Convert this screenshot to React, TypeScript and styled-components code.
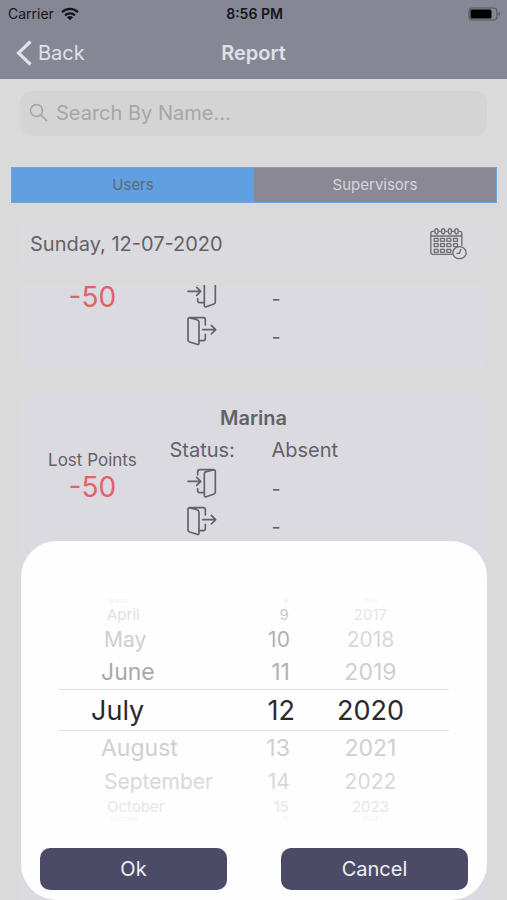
import React, { useLayoutEffect, useRef, useState } from "react";
import styled, { createGlobalStyle } from "styled-components";

const GlobalStyle = createGlobalStyle`
  *, *::before, *::after { box-sizing: border-box; }
  body {
    margin: 0;
    background: #dadada;
    font-family: Inter, "Liberation Sans", sans-serif;
  }
  button, input { font: inherit; }
`;

const Screen = styled.div`
  position: relative;
  display: flex;
  flex-direction: column;
  height: 100vh;
  overflow: hidden;
  color: #636267;
  background: #dadada;
`;

const Header = styled.header`
  flex: none;
  background: #858894;
`;

const StatusBar = styled.div`
  display: grid;
  grid-template-columns: 1fr auto 1fr;
  align-items: center;
  height: 27px;
  padding: 0 6px 0 8px;
  font-size: 14px;
  color: #14151d;
`;

const Carrier = styled.span`
  display: flex;
  align-items: center;
  gap: 7px;
`;

const Clock = styled.time`
  font-weight: 600;
`;

const BatteryIcon = styled.svg`
  justify-self: end;
`;

const NavBar = styled.nav`
  display: grid;
  grid-template-columns: 1fr auto 1fr;
  align-items: center;
  height: 52px;
  padding: 0 16px;
  color: #e0e0e8;
`;

const BackButton = styled.button`
  display: flex;
  align-items: center;
  justify-self: start;
  gap: 6px;
  padding: 0;
  border: 0;
  background: none;
  color: inherit;
  font-size: 20px;
`;

const Title = styled.h1`
  margin: 0;
  font-size: 20px;
  font-weight: 600;
`;

const SearchBox = styled.label`
  display: flex;
  flex: none;
  align-items: center;
  gap: 8px;
  height: 45px;
  margin: 12px 20px 31px;
  padding: 0 9px 2px;
  border-radius: 12px;
  background: #d4d4d4;
  color: #a3a3a5;
`;

const SearchInput = styled.input`
  flex: 1;
  min-width: 0;
  padding: 0;
  border: 0;
  outline: 0;
  background: none;
  color: #636267;
  font-size: 20px;
  &::placeholder { color: #a6a6a8; opacity: 1; }
`;

const Tabs = styled.div`
  display: grid;
  flex: none;
  grid-template-columns: 1fr 1fr;
  height: 36px;
  margin: 0 10px 0 11px;
  border: 1px solid #6fa3dc;
`;

const Tab = styled.button<{ $active: boolean }>`
  padding: 0 0 2px;
  border: 0;
  background: ${(p) => (p.$active ? "#619fe0" : "#8b8895")};
  color: ${(p) => (p.$active ? "#5d6878" : "#d6d5db")};
  font-size: 15px;
`;

const DateBar = styled.div`
  display: flex;
  flex: none;
  align-items: center;
  justify-content: space-between;
  height: 44px;
  margin: 19px 20px;
  padding: 0 20px 0 10px;
  background: #dbdadf;
  font-size: 20px;
`;

const IconButton = styled.button`
  display: flex;
  padding: 0;
  border: 0;
  background: none;
  color: #6c6c71;
`;

const List = styled.main`
  display: flex;
  flex: 1;
  flex-direction: column;
  gap: 22px;
  min-height: 0;
  padding: 0 20px;
  overflow-y: auto;
  scrollbar-width: none;
`;

const Card = styled.article`
  flex: none;
  min-height: 168px;
  padding: 12px 0 16px;
  border-radius: 14px;
  background: #dbdae1;
`;

const CardName = styled.h2`
  min-height: 28px;
  margin: 0;
  font-size: 20px;
  font-weight: 600;
  line-height: 28px;
  text-align: center;
`;

const CardBody = styled.div`
  display: grid;
  grid-template-columns: 31% 16% 1fr;
  font-size: 20px;
`;

const Lost = styled.div`
  grid-row: span 3;
  padding-top: 16px;
  font-size: 17px;
  line-height: 24px;
  text-align: center;
`;

const Points = styled.div`
  color: #e2626a;
  font-size: 28px;
  line-height: 30px;
`;

const Label = styled.div`
  height: 36px;
  line-height: 36px;
  text-align: center;
`;

const Value = styled.div`
  height: 36px;
  padding-left: 32px;
  line-height: 36px;
`;

const Direction = styled.div`
  display: flex;
  justify-content: center;
  height: 38px;
`;

const TimeValue = styled.div`
  height: 38px;
  padding-left: 32px;
  line-height: 42px;
`;

const Sheet = styled.section`
  position: absolute;
  right: 20px;
  bottom: 0;
  left: 21px;
  padding: 56px 19px 10px;
  border-radius: 36px;
  background: #fefefe;
`;

const Wheels = styled.div`
  display: grid;
  grid-template-columns: 46% 15% 1fr;
  margin: 0 19px 25px;
`;

type Align = "left" | "right" | "center";

const WheelColumn = styled.div`
  display: flex;
  flex-direction: column;
`;

const rowHeights = [42, 34, 32, 18, 8];
const rowSizes = [27, 23, 21, 15, 6];
const fadedColors = ["#2a2a2c", "#cfcfd1", "#d8d8da", "#e6e6e7", "#f4f4f4"];
const monthColors = ["#2a2a2c", "#a9a9ab", "#cfcfd1", "#e0e0e1", "#f2f2f2"];
const dayColors = ["#2a2a2c", "#b2b2b4", "#b0b0b2", "#cbcbcc", "#e8e8e8"];
const leftInsets = [32, 42, 45, 48, 50];
const rightInsets = [2, 7, 7, 8, 9];

const insets: Record<Align, (distance: number) => string> = {
  left: (distance) => `0 0 0 ${leftInsets[distance]}px`,
  right: (distance) => `0 ${rightInsets[distance]}px 0 0`,
  center: () => "0 5px 0 0",
};

const WheelOption = styled.button<{ $distance: number; $align: Align; $color: string }>`
  height: ${(p) => rowHeights[p.$distance]}px;
  padding: ${(p) => insets[p.$align](p.$distance)};
  border: 0 solid #dededf;
  border-width: ${(p) => (p.$distance === 0 ? "1px 0" : "0")};
  background: none;
  color: ${(p) => p.$color};
  font-size: ${(p) => rowSizes[p.$distance]}px;
  line-height: 1;
  text-align: ${(p) => p.$align};
`;

const Actions = styled.div`
  display: grid;
  grid-template-columns: 1fr 1fr;
  gap: 54px;
`;

const ActionButton = styled.button`
  height: 42px;
  border: 0;
  border-radius: 10px;
  background: #4c4b67;
  color: #eeeef6;
  font-size: 20px;
`;

function WifiIcon() {
  return (
    <svg width="18" height="14" viewBox="0 0 18 14" aria-hidden="true">
      <g fill="none" stroke="currentColor" strokeWidth="2.3">
        <path d="M1 5.2C5.4.8 12.6.8 17 5.2" />
        <path d="M4 8.3c2.8-2.7 7.2-2.7 10 0" />
      </g>
      <path d="M9 13.3 5.9 10.2c1.7-1.6 4.5-1.6 6.2 0Z" fill="currentColor" />
    </svg>
  );
}

function Battery() {
  return (
    <BatteryIcon width="33" height="14" viewBox="0 0 33 14" aria-hidden="true">
      <rect x="1" y="1" width="28" height="12" rx="3.5" fill="none" stroke="#54565f" strokeWidth="1.2" />
      <rect x="2.5" y="2.5" width="21" height="9" rx="1.5" fill="#000" />
      <path d="M30.5 5v4c2-.8 2-3.2 0-4Z" fill="#54565f" />
    </BatteryIcon>
  );
}

function BackIcon() {
  return (
    <svg width="16" height="26" viewBox="0 0 16 26" aria-hidden="true">
      <path d="M14.500 1.500 2.500 13l12 11.500" fill="none" stroke="currentColor" strokeWidth="3.2" />
    </svg>
  );
}

function SearchIcon() {
  return (
    <svg width="19" height="19" viewBox="0 0 19 19" aria-hidden="true">
      <g fill="none" stroke="currentColor" strokeWidth="1.5">
        <circle cx="7.5" cy="7.5" r="6" />
        <path d="m12 12 6 6" />
      </g>
    </svg>
  );
}

function CalendarIcon() {
  return (
    <svg width="37" height="32" viewBox="0 0 110 96" aria-hidden="true">
      <g fill="none" stroke="currentColor" strokeWidth="4">
        <path d="M67 79H8q-6 0-6-6V16q0-6 6-6h4M25 10h7M45 10h7M65 10h7M85 10h4q6 0 6 6v38M2 24H95" />
        {[19, 39, 59, 79].map((x) => (
          <ellipse key={x} cx={x} cy="10" rx="5" ry="8" />
        ))}
        {[31, 47, 64].map((y) =>
          [12, 31, 50, 70].map((x) => <rect key={`${x}-${y}`} x={x} y={y} width="12" height="9" rx="1" />),
        )}
        <ellipse cx="88" cy="74" rx="20" ry="18" fill="#dbdadf" />
        <path d="M92 63 88 76h-9" />
      </g>
    </svg>
  );
}

function DoorIcon({ direction }: { direction: "in" | "out" }) {
  return (
    <svg width="30" height="30" viewBox="0 0 90 90" role="img" aria-label={direction === "in" ? "Check in" : "Check out"}>
      <g fill="none" stroke="#626168" strokeWidth="5" strokeLinecap="round" strokeLinejoin="round">
        {direction === "in" ? (
          <>
            <path d="M3 40H38M29 28 41 40 29 52" />
            <path d="M32 20V12Q32 5 39 5H80M32 62V67Q32 74 38 74H52" />
            <path d="M58 11 79 6Q85 5 85 11V72Q85 77 81 78L58 86Q52 88 52 82V18Q52 12 58 11Z" />
          </>
        ) : (
          <>
            <path d="M9 6 30 11Q36 13 36 19V81Q36 87 30 85L8 78Q3 76 3 72V11Q3 5 9 5H49Q55 5 55 11V27" />
            <path d="M55 55V67Q55 74 49 74H37M47 41H84M73 28 86 41 73 54" />
          </>
        )}
      </g>
    </svg>
  );
}

type Person = { name: string; status: string; lost: number };

function PersonCard({ name, status, lost }: Person) {
  return (
    <Card>
      <CardName>{name}</CardName>
      <CardBody>
        <Lost>
          Lost Points
          <Points>{lost}</Points>
        </Lost>
        <Label>Status:</Label>
        <Value>{status}</Value>
        <Direction><DoorIcon direction="in" /></Direction>
        <TimeValue>-</TimeValue>
        <Direction><DoorIcon direction="out" /></Direction>
        <TimeValue>-</TimeValue>
      </CardBody>
    </Card>
  );
}

const people: Person[] = [
  { name: "", status: "Absent", lost: -50 },
  { name: "Marina", status: "Absent", lost: -50 },
];

const months = [
  "January", "February", "March", "April", "May", "June",
  "July", "August", "September", "October", "November", "December",
];

type WheelProps = {
  label: string;
  start: number;
  format: (value: number) => string;
  align: Align;
  before: string[];
};

function Wheel({ label, start, format, align, before }: WheelProps) {
  const [value, setValue] = useState(start);
  return (
    <WheelColumn role="listbox" aria-label={label}>
      {[-4, -3, -2, -1, 0, 1, 2, 3, 4].map((step) => (
        <WheelOption
          key={step}
          type="button"
          role="option"
          aria-selected={step === 0}
          $distance={Math.abs(step)}
          $align={align}
          $color={(step < 0 ? before : fadedColors)[Math.abs(step)]}
          onClick={() => setValue(value + step)}
        >
          {format(value + step)}
        </WheelOption>
      ))}
    </WheelColumn>
  );
}

const cycle = (value: number, size: number) => ((value % size) + size) % size;

export default function App() {
  const [tab, setTab] = useState("Users");
  const list = useRef<HTMLElement>(null);

  useLayoutEffect(() => {
    if (list.current) list.current.scrollTop = 83;
  }, []);

  return (
    <>
      <GlobalStyle />
      <Screen>
        <Header>
          <StatusBar>
            <Carrier>Carrier <WifiIcon /></Carrier>
            <Clock>8:56 PM</Clock>
            <Battery />
          </StatusBar>
          <NavBar>
            <BackButton type="button"><BackIcon />Back</BackButton>
            <Title>Report</Title>
          </NavBar>
        </Header>
        <SearchBox>
          <SearchIcon />
          <SearchInput type="text" aria-label="Search By Name" placeholder="Search By Name..." />
        </SearchBox>
        <Tabs role="tablist">
          {["Users", "Supervisors"].map((name) => (
            <Tab key={name} type="button" role="tab" aria-selected={tab === name} $active={tab === name} onClick={() => setTab(name)}>
              {name}
            </Tab>
          ))}
        </Tabs>
        <DateBar>
          <span>Sunday, 12-07-2020</span>
          <IconButton type="button" aria-label="Choose date"><CalendarIcon /></IconButton>
        </DateBar>
        <List ref={list}>
          {people.map((person, index) => <PersonCard key={index} {...person} />)}
          <Card />
          <Card />
        </List>
        <Sheet role="dialog" aria-label="Date">
          <Wheels>
            <Wheel label="Month" start={6} format={(v) => months[cycle(v, 12)]} align="left" before={monthColors} />
            <Wheel label="Day" start={12} format={(v) => String(cycle(v - 1, 31) + 1)} align="right" before={dayColors} />
            <Wheel label="Year" start={2020} format={String} align="center" before={fadedColors} />
          </Wheels>
          <Actions>
            <ActionButton type="button">Ok</ActionButton>
            <ActionButton type="button">Cancel</ActionButton>
          </Actions>
        </Sheet>
      </Screen>
    </>
  );
}
